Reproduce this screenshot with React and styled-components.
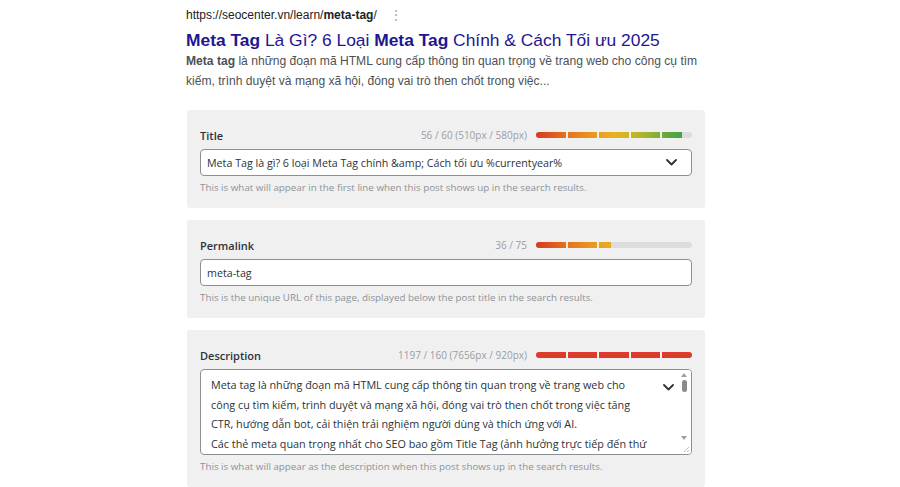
import React from 'react';
import styled, { createGlobalStyle } from 'styled-components';

const GlobalStyle = createGlobalStyle`
  html, body {
    margin: 0;
    padding: 0;
    background: #ffffff;
  }
`;

const Page = styled.div`
  width: 900px;
  height: 487px;
  overflow: hidden;
  background: #fff;
  padding-left: 186px;
  box-sizing: border-box;
`;

const Column = styled.div`
  width: 519px;
  display: flex;
  flex-direction: column;
`;

/* ---------- search preview ---------- */

const Preview = styled.div`
  font-family: "Liberation Sans", Arial, sans-serif;
  padding-top: 7px;
  margin-bottom: 19px;
`;

const UrlRow = styled.div`
  display: flex;
  align-items: center;
  gap: 13px;
  font-size: 12px;
  line-height: 16px;
  color: #202124;

  b {
    font-weight: 700;
  }
`;

const Kebab = styled.span`
  color: #9aa0a6;
  font-size: 12px;
  line-height: 16px;
`;

const ResultTitle = styled.div`
  margin-top: 6px;
  font-size: 17.4px;
  line-height: 22px;
  color: #1f1690;
  white-space: nowrap;

  b {
    font-weight: 700;
  }
`;

const Snippet = styled.div`
  font-size: 12.1px;
  line-height: 20px;
  color: #4d5156;
  white-space: nowrap;

  b {
    font-weight: 700;
  }
`;

/* ---------- fields ---------- */

const Panel = styled.div`
  margin-left: 1px;
  margin-bottom: 12px;
  background: #f0f0f1;
  border-radius: 3px;
  padding: 17px 13px 13px;
  font-family: "Open Sans", "Noto Sans", sans-serif;
`;

const FieldHead = styled.div`
  display: flex;
  align-items: center;
  justify-content: space-between;
  height: 16px;
  margin-bottom: 6px;
`;

const Label = styled.span`
  font-size: 11px;
  font-weight: 600;
  color: #2c3338;
`;

const Meter = styled.div`
  display: flex;
  align-items: center;
  gap: 9px;
`;

const Count = styled.span`
  font-size: 10px;
  color: #9a9da2;
  white-space: nowrap;
`;

const Track = styled.div`
  width: 156px;
  height: 6px;
  border-radius: 3px;
  background: #dcdcde;
  overflow: hidden;
`;

const Fill = styled.div`
  height: 100%;
  background:
    repeating-linear-gradient(to right, transparent 0 29.6px, #f0f0f1 29.6px 31.6px),
    ${p => p.$over
      ? '#dc3a2b'
      : 'linear-gradient(to right, #d63a23 0%, #e5731e 20%, #e8921d 33%, #e9b021 50%, #cdb526 60%, #9db431 72%, #62a83c 84%, #3f9f48 95%)'};
  background-size: 156px 100%;
  background-repeat: no-repeat;
`;

const InputBox = styled.div`
  height: 27px;
  box-sizing: border-box;
  border: 1px solid #8c8f94;
  border-radius: 4px;
  background: #fff;
  display: flex;
  align-items: center;
  justify-content: space-between;
  padding: 0 14px 0 6px;
  font-size: 10.7px;
  color: #2c3338;
  white-space: nowrap;
`;

const AreaBox = styled.div`
  position: relative;
  height: 86px;
  box-sizing: border-box;
  border: 1px solid #8c8f94;
  border-radius: 4px;
  background: #fff;
  overflow: hidden;
  padding: 5px 0 0 10px;
  font-size: 10.8px;
  line-height: 19.5px;
  color: #2c3338;
`;

const AreaLine = styled.div`
  white-space: nowrap;
`;

const AreaControls = styled.div`
  position: absolute;
  top: 0;
  right: 0;
  bottom: 0;
  width: 28px;
  background: #fff;
`;

const AreaChevron = styled.div`
  position: absolute;
  top: 7px;
  left: 0;
`;

const ScrollBar = styled.div`
  position: absolute;
  top: 2px;
  right: 3px;
  bottom: 2px;
  width: 8px;
  display: flex;
  flex-direction: column;
  align-items: center;
`;

const Thumb = styled.div`
  width: 5px;
  height: 12px;
  border-radius: 3px;
  background: #8a8a8a;
  margin-top: 3px;
`;

const Arrow = styled.div`
  width: 0;
  height: 0;
  border-left: 3px solid transparent;
  border-right: 3px solid transparent;
  ${p => p.$down
    ? 'border-top: 4px solid #a0a0a0; margin-top: auto; margin-bottom: 12px;'
    : 'border-bottom: 4px solid #a0a0a0; margin-top: 1px;'}
`;

const Grip = styled.svg`
  position: absolute;
  right: 1px;
  bottom: 1px;
`;

const Help = styled.div`
  margin-top: 5px;
  font-size: 9.8px;
  line-height: 14px;
  color: #8f9296;
  white-space: nowrap;
`;

const Chevron = () => (
  <svg width="11" height="7" viewBox="0 0 11 7" fill="none">
    <path d="M1 1l4.5 4.5L10 1" stroke="#2c3338" strokeWidth="1.8" strokeLinecap="round" strokeLinejoin="round" />
  </svg>
);

const LengthMeter = ({ text, value, max, over }) => (
  <Meter>
    <Count>{text}</Count>
    <Track>
      <Fill $over={over} style={{ width: `${Math.min(100, (value / max) * 100)}%` }} />
    </Track>
  </Meter>
);

const descLines = [
  'Meta tag là những đoạn mã HTML cung cấp thông tin quan trọng về trang web cho',
  'công cụ tìm kiếm, trình duyệt và mạng xã hội, đóng vai trò then chốt trong việc tăng',
  'CTR, hướng dẫn bot, cải thiện trải nghiệm người dùng và thích ứng với AI.',
  'Các thẻ meta quan trọng nhất cho SEO bao gồm Title Tag (ảnh hưởng trực tiếp đến thứ',
  'hạng và CTR), Meta Description (thúc đẩy CTR), Meta Robots (kiểm soát thu thập/lập',
];

export default function App() {
  return (
    <>
      <GlobalStyle />
      <Page>
        <Column>
          <Preview>
            <UrlRow>
              <span>https://seocenter.vn/learn/<b>meta-tag</b>/</span>
              <Kebab>⋮</Kebab>
            </UrlRow>
            <ResultTitle>
              <b>Meta Tag</b> Là Gì? 6 Loại <b>Meta Tag</b> Chính &amp; Cách Tối ưu 2025
            </ResultTitle>
            <Snippet>
              <b>Meta tag</b> là những đoạn mã HTML cung cấp thông tin quan trọng về trang web cho công cụ tìm
              <br />
              kiếm, trình duyệt và mạng xã hội, đóng vai trò then chốt trong việc...
            </Snippet>
          </Preview>

          <Panel>
            <FieldHead>
              <Label>Title</Label>
              <LengthMeter text="56 / 60 (510px / 580px)" value={56} max={60} />
            </FieldHead>
            <InputBox>
              <span>Meta Tag là gì? 6 loại Meta Tag chính &amp;amp; Cách tối ưu %currentyear%</span>
              <Chevron />
            </InputBox>
            <Help>This is what will appear in the first line when this post shows up in the search results.</Help>
          </Panel>

          <Panel>
            <FieldHead>
              <Label>Permalink</Label>
              <LengthMeter text="36 / 75" value={36} max={75} />
            </FieldHead>
            <InputBox>
              <span>meta-tag</span>
            </InputBox>
            <Help>This is the unique URL of this page, displayed below the post title in the search results.</Help>
          </Panel>

          <Panel>
            <FieldHead>
              <Label>Description</Label>
              <LengthMeter text="1197 / 160 (7656px / 920px)" value={1197} max={160} over />
            </FieldHead>
            <AreaBox>
              {descLines.map((line, i) => (
                <AreaLine key={i}>{line}</AreaLine>
              ))}
              <AreaControls>
                <AreaChevron>
                  <Chevron />
                </AreaChevron>
                <ScrollBar>
                  <Arrow />
                  <Thumb />
                  <Arrow $down />
                </ScrollBar>
                <Grip width="7" height="7" viewBox="0 0 7 7">
                  <path d="M6 1L1 6M6 4L4 6" stroke="#b0b0b0" strokeWidth="0.8" />
                </Grip>
              </AreaControls>
            </AreaBox>
            <Help>This is what will appear as the description when this post shows up in the search results.</Help>
          </Panel>
        </Column>
      </Page>
    </>
  );
}
